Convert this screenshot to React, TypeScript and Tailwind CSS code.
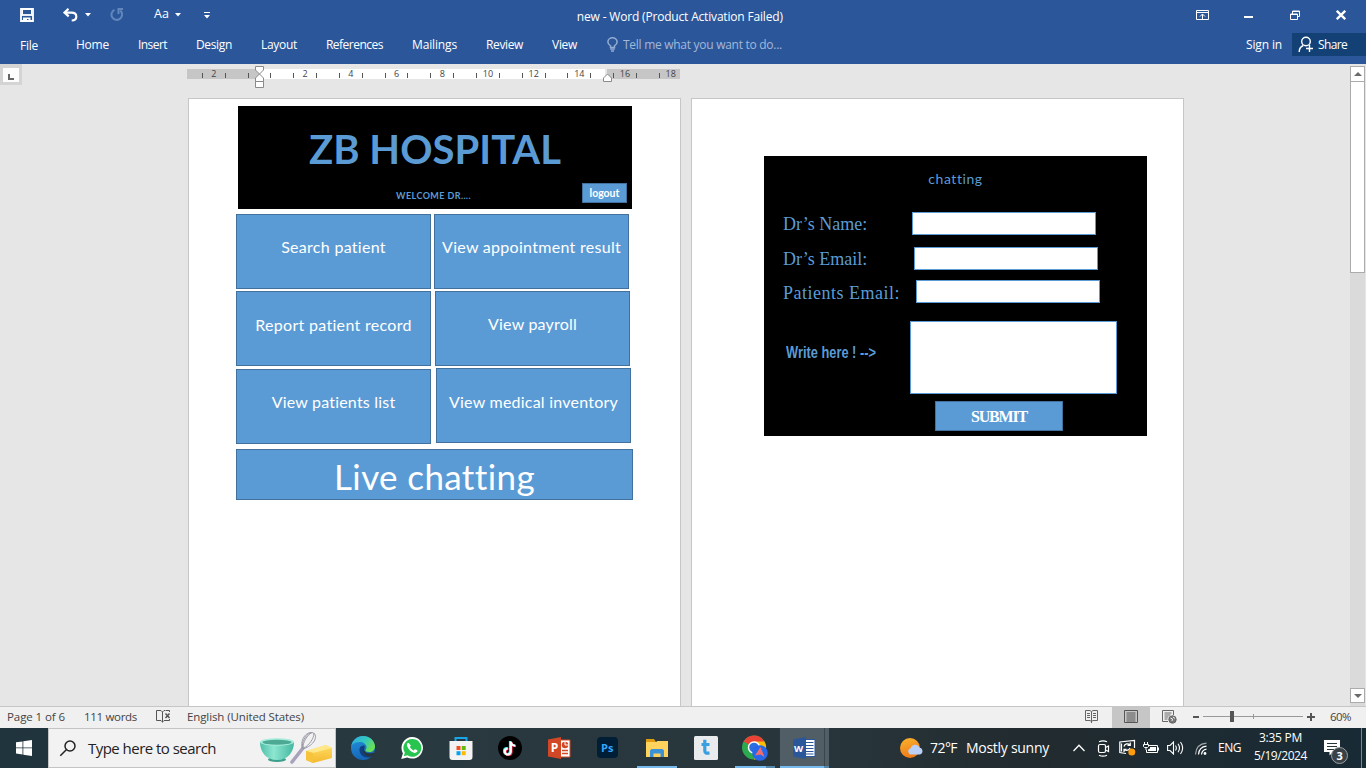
import React from "react";

const tabs = [
  { label: "Home", cls: "tracking-[-0.23px]" },
  { label: "Insert", cls: "tracking-[-0.56px]" },
  { label: "Design", cls: "tracking-[-0.35px]" },
  { label: "Layout", cls: "tracking-[-0.3px]" },
  { label: "References", cls: "tracking-[-0.51px]" },
  { label: "Mailings", cls: "tracking-[-0.14px]" },
  { label: "Review", cls: "tracking-[-0.37px]" },
  { label: "View", cls: "tracking-[-0.31px]" },
];

function Caret({ className = "" }: { className?: string }) {
  return (
    <svg className={className} width="6" height="4" viewBox="0 0 6 4" fill="#fff">
      <path d="M0 0h6L3 3.5z" />
    </svg>
  );
}

function TitleBar() {
  return (
    <div className="flex h-8 items-start">
      <svg className="ml-5 mt-2" width="14" height="14" viewBox="0 0 14 14" fill="none" stroke="#fff">
        <path d="M1 1h12v12H1z" strokeWidth="1.8" />
        <path d="M1 7h12" strokeWidth="1.8" />
        <path d="M3 9.5h7.5V13h-2v-2h-1.500v2H3z" fill="#fff" stroke="none" />
        <path d="M2.500 1v5.500M11.500 1v5.500" strokeWidth="1" />
      </svg>
      <svg className="ml-[29px] mt-[8px]" width="15" height="14" viewBox="0 0 15 14" fill="none" stroke="#fff" strokeWidth="2.2">
        <path d="M5.500 .8L1.500 4.600l4.200 3.800" />
        <path d="M2 4.600h6.500c3 0 4.800 1.600 4.800 3.900s-1.700 4-4.600 4" />
      </svg>
      <Caret className="ml-[7px] mt-[13px]" />
      <svg className="ml-[19px] mt-[8px]" width="14" height="14" viewBox="0 0 14 14" fill="none" stroke="#6287bd" strokeWidth="2">
        <path d="M4.500 1.800A5.300 5.300 0 1 0 10.300 2.600" />
        <path d="M13 1H8.500v5" />
      </svg>
      <span className="ml-[30px] mt-[5px] text-[12.5px] leading-[18px] text-white">Aa</span>
      <Caret className="ml-[6px] mt-[13px]" />
      <svg className="ml-[23px] mt-[12px]" width="6" height="7" viewBox="0 0 6 7" fill="#fff">
        <path d="M0 0h6v1H0zM0 3h6L3 6.500z" />
      </svg>
      <span className="ml-[367px] mt-2 w-[206px] text-[12px] leading-[18px] tracking-[-0.18px] text-white">new - Word (Product Activation Failed)</span>
      <svg className="ml-[413px] mt-[10px]" width="13" height="10" viewBox="0 0 13 10" fill="none" stroke="#fff">
        <path d="M.5.5h12v9H.5zM.5 2.500h12M6.500 9V4M4 6.500L6.500 4 9 6.500" />
      </svg>
      <span className="ml-[35px] mt-4 h-[2px] w-[9px] bg-white" />
      <svg className="ml-[37px] mt-[10px]" width="10" height="10" viewBox="0 0 10 10" fill="none" stroke="#fff">
        <path d="M.5 4h7v5.500h-7zM.5 4.500h7M2.500 4V1h7v5.500h-2M2.500 1.500h7" />
      </svg>
      <svg className="ml-[36px] mt-[10px]" width="10" height="10" viewBox="0 0 10 10" stroke="#fff" strokeWidth="2.300">
        <path d="M.8.8l8.400 8.400M9.200.8L.8 9.200" />
      </svg>
    </div>
  );
}

function TabBar() {
  return (
    <div className="flex h-8 text-[12px] leading-[18px] text-white">
      <span className="ml-5 mt-[5px] w-[56px] tracking-[-0.25px]">File</span>
      <div className="mt-1 flex gap-[29px]">
        {tabs.map((t) => (
          <span key={t.label} className={t.cls}>
            {t.label}
          </span>
        ))}
      </div>
      <svg className="ml-[30px] mt-[5px]" width="11" height="15" viewBox="0 0 11 15" fill="none" stroke="#93acd2" strokeWidth="1.500">
        <path d="M3.500 10.500V8.800C1.800 7.800.9 6.600.9 5a4.600 4.200 0 0 1 9.200 0c0 1.600-.9 2.800-2.600 3.800v1.700z" />
        <path d="M3.200 12h4.600M4 14h3" />
      </svg>
      <span className="ml-[5px] mt-1 w-[159px] whitespace-nowrap tracking-[-0.28px] text-[#a3b8d9]">Tell me what you want to do...</span>
      <span className="ml-auto mt-1 w-[46px] tracking-[-0.14px]">Sign in</span>
      <div className="mt-px flex h-[23px] w-[74px] bg-[#134176]">
        <svg className="ml-[6px] mt-[3px]" width="17" height="17" viewBox="0 0 17 17" fill="none" stroke="#fff" strokeWidth="1.400">
          <circle cx="8" cy="5.500" r="4.300" />
          <path d="M1.200 16c0-3.300 1.500-5.300 4-6.500M8 12.500h7M11.500 9v7" />
        </svg>
        <span className="ml-[3px] mt-[3px] tracking-[-0.65px]">Share</span>
      </div>
    </div>
  );
}

function Ruler() {
  const marks = Array.from({ length: 42 }, (_, i) => i - 5);
  return (
    <div className="relative ml-[187px] mt-[5px] flex h-[10px] w-[493px] items-center bg-[linear-gradient(to_right,#c6c6c6_72px,#fff_72px,#fff_418px,#e6e6e6_418px,#e6e6e6_420px,#c6c6c6_420px)] pl-[9.700px]">
      {marks.map((n) => (
        <span key={n} className="flex w-[11.425px] shrink-0 justify-center text-[9px] leading-[10px] text-[#444]">
          {n % 2 !== 0 ? <i className="mt-[2px] block h-[5px] w-px bg-[#555]" /> : n % 4 === 0 && n !== 0 ? Math.abs(n / 2) : null}
        </span>
      ))}
      <svg className="absolute -top-[3px] left-[68px]" width="9" height="22" viewBox="0 0 9 22" fill="#fff" stroke="#8a8a8a">
        <path d="M.5.5h8V4L4.500 8 .5 4zM.5 15.500h8V12L4.500 8 .5 12zM.5 15.500h8v6h-8z" />
      </svg>
      <svg className="absolute top-[4px] left-[416px]" width="9" height="9" viewBox="0 0 9 9" fill="#fff" stroke="#8a8a8a">
        <path d="M.5 8.500h8V5L4.500 1 .5 5z" />
      </svg>
    </div>
  );
}

const tile = "flex h-[75px] w-[195px] justify-center border border-[#41719c] bg-[#5b9bd5] leading-5 text-[16px] whitespace-nowrap text-white";

function HospitalPage() {
  return (
    <div className="w-[493px] border border-b-0 border-[#c6c6c6] bg-white font-['Lato',sans-serif]">
      <div className="ml-[49px] mt-[7px] flex h-[103px] w-[394px] flex-col bg-black text-[#5b9bd5]">
        <div className="mt-[18px] text-center text-[40px] leading-[50px] font-bold tracking-[0.020px]">ZB HOSPITAL</div>
        <div className="flex">
          <span className="ml-[158px] mt-[16px] w-[186px] text-[9px] leading-3 font-bold tracking-[0.440px]">WELCOME DR….</span>
          <span className="mt-[9px] h-5 w-[45px] border border-[#41719c] bg-[#5b9bd5] text-center text-[10.500px] leading-[19px] font-bold text-white">logout</span>
        </div>
      </div>
      <div className="ml-[47px] mt-[5px] flex gap-[3px]">
        <div className="flex flex-col">
          <div className={`${tile} pt-[22px] tracking-[0.29px]`}>Search patient</div>
          <div className={`${tile} mt-[2px] pt-[23px] tracking-[0.31px]`}>Report patient record</div>
          <div className={`${tile} mt-[3px] pt-[22px] tracking-[0.2px]`}>View patients list</div>
        </div>
        <div className="flex flex-col">
          <div className={`${tile} pt-[22px] tracking-[0.29px]`}>View appointment result</div>
          <div className={`${tile} ml-px mt-[2px] pt-[22px] tracking-[0.21px]`}>View payroll</div>
          <div className={`${tile} ml-[2px] mt-[2px] pt-[23px] tracking-[0.23px]`}>View medical inventory</div>
        </div>
      </div>
      <div className="ml-[47px] mt-[5px] h-[51px] w-[397px] border border-[#41719c] bg-[#5b9bd5] pt-[5px] text-center text-[35px] leading-[42px] tracking-[0.38px] text-white">Live chatting</div>
    </div>
  );
}

function ChatPage() {
  const label = "w-[129px] font-['Liberation_Serif',serif] text-[18px] leading-5";
  return (
    <div className="w-[493px] border border-b-0 border-[#c6c6c6] bg-white pl-[72px] pt-[57px]">
      <div className="flex h-[280px] w-[383px] flex-col bg-black text-[#5b9bd5]">
        <div className="mt-[13px] text-center font-['Lato',sans-serif] text-[14px] leading-5 tracking-[0.56px]">chatting</div>
        <div className="ml-[19px] mt-[23px] flex items-center">
          <span className={label}>Dr’s Name:</span>
          <span className="h-[23px] w-[184px] border border-[#5b9bd5] bg-white" />
        </div>
        <div className="ml-[19px] mt-[12px] flex items-center">
          <span className={label}>Dr’s Email:</span>
          <span className="ml-[2px] h-[23px] w-[184px] border border-[#5b9bd5] bg-white" />
        </div>
        <div className="ml-[19px] mt-[10px] flex items-center">
          <span className={`${label} pt-[3px] tracking-[0.5px]`}>Patients Email:</span>
          <span className="ml-[4px] h-[23px] w-[184px] border border-[#5b9bd5] bg-white" />
        </div>
        <div className="ml-[22px] mt-[18px] flex">
          <span className="mt-[21px] w-[124px] origin-left scale-x-[0.755] font-['Liberation_Sans',sans-serif] text-[17px] leading-[22px] font-bold whitespace-nowrap">{"Write here ! -->"}</span>
          <span className="h-[73px] w-[207px] border border-[#5b9bd5] bg-white" />
        </div>
        <div className="ml-[171px] mt-[7px] h-[30px] w-[128px] border border-[#41719c] bg-[#5b9bd5] text-center font-['Liberation_Serif',serif] text-[16px] leading-[29px] font-bold tracking-[-1.190px] text-white">SUBMIT</div>
      </div>
    </div>
  );
}

function ScrollBar() {
  return (
    <div className="mr-px mt-[2px] flex w-[15px] flex-col bg-[#dadada]">
      <div className="flex h-[16px] items-center justify-center border border-[#ababab] bg-white">
        <svg width="8" height="4" viewBox="0 0 8 4" fill="#6a6a6a"><path d="M4 0l4 4H0z" /></svg>
      </div>
      <div className="-mt-px h-[192px] border border-[#ababab] bg-white" />
      <div className="mb-[3px] mt-auto flex h-[15px] items-center justify-center border border-[#ababab] bg-white">
        <svg width="8" height="4" viewBox="0 0 8 4" fill="#6a6a6a"><path d="M4 4L0 0h8z" /></svg>
      </div>
    </div>
  );
}

function StatusBar() {
  return (
    <div className="flex h-[22px] border-t border-[#c6c6c6] bg-[#f0f0f0] text-[11.500px] leading-5 whitespace-nowrap text-[#444]">
      <span className="ml-[7px] w-[77px] tracking-[-0.080px]">Page 1 of 6</span>
      <span className="w-[72px] tracking-[-0.310px]">111 words</span>
      <svg className="mt-[3px]" width="15" height="13" viewBox="0 0 15 13" fill="none" stroke="#555">
        <path d="M6.500 2L5 .5H.5v10H5L6.500 12M6.500 2v10.500M6.500 2L8 .5h1.500M6.500 12L8 10.500h5.500V9M13.500 2V.5H10" />
        <path d="M9.500 3.500l4 4.500M13.500 3.500l-4 4.500" strokeWidth="1.500" />
      </svg>
      <span className="ml-[16px] tracking-[-0.110px]">English (United States)</span>
      <svg className="ml-auto mt-[3px]" width="13" height="13" viewBox="0 0 13 13" fill="none" stroke="#666">
        <path d="M.5.5H5l1.500 1L8 .5h4.500v10H8l-1.500 1-1.500-1H.5zM6.500 1.500V13M2 3.500h3M2 5.500h3M2 7.500h3M8 3.500h3M8 5.500h3M8 7.500h3" />
      </svg>
      <div className="ml-[14px] flex w-[38px] justify-center bg-[#c6c6c6] pt-[3px]">
        <svg width="14" height="13" viewBox="0 0 14 13" fill="none" stroke="#555">
          <path d="M.5.5h13v12H.5zM2.500 3h9M2.500 5h9M2.500 7h9M2.500 9h9M2.500 11h9" />
        </svg>
      </div>
      <svg className="ml-[12px] mt-[3px]" width="15" height="14" viewBox="0 0 15 14" fill="none" stroke="#666">
        <path d="M6 11.500H.5V.5h11V5M2.500 3h7M2.500 5h6M2.500 7h4M2.500 9h3" />
        <circle cx="10.500" cy="9.500" r="3.700" fill="#777" />
        <path d="M8.500 8l2 1-.5 2M11 7l2 1.500" stroke="#f0f0f0" />
      </svg>
      <span className="ml-[16px] mt-[9px] h-[2px] w-[6px] bg-[#555]" />
      <svg className="ml-[4px] mt-[4px]" width="100" height="12" viewBox="0 0 100 12">
        <path d="M0 5.500h100M50.500 3v5" stroke="#999" />
        <path d="M27 0h4v11h-4z" fill="#555" />
      </svg>
      <svg className="ml-[4px] mt-[6px]" width="8" height="8" viewBox="0 0 8 8"><path d="M0 4h8M4 0v8" stroke="#555" strokeWidth="2" /></svg>
      <span className="ml-[15px] mr-[14px] w-[22px] tracking-[-0.560px]">60%</span>
    </div>
  );
}

const taskIcons = [
  <svg key="edge" width="24" height="24" viewBox="0 0 24 24">
    <defs>
      <linearGradient id="e1" x1="0" y1="0" x2="1" y2="0.600"><stop offset="0" stopColor="#2aa8e8" /><stop offset="0.550" stopColor="#35c8bd" /><stop offset="1" stopColor="#6be04f" /></linearGradient>
      <linearGradient id="e2" x1="0" y1="0" x2="0.300" y2="1"><stop offset="0" stopColor="#2595dd" /><stop offset="1" stopColor="#1566b8" /></linearGradient>
    </defs>
    <circle cx="12" cy="12" r="12" fill="url(#e2)" />
    <path d="M.3 10C1.500 4 6.300 0 12 0c6.500 0 12 4.800 12 10.500 0 3.500-2.600 5.500-5.500 5.500-3 0-4.300-1-4-2 .6-.8 1-1.500 1-2.800C15.500 8 12.200 6 8.800 6 5 6 1.600 7.600.3 10z" fill="url(#e1)" />
    <path d="M8.500 13c-.5 5 3.500 8.500 8 8.500 2.500 0 4.700-.9 6-2.300.4-.5 0-.9-.6-.7-5.400 1.600-9-.8-8.700-4.300-.2-2.400 1.200-3 .3-4.500C11.500 9 8.800 10.500 8.500 13z" fill="#123f7e" />
    <path d="M13.200 12c-1 4 3 6.300 8.600 4.700l2 .8-1.700 2.500-4.600.6c-4-1.200-6.500-5-4.300-8.600z" fill="#25363d" />
  </svg>,
  <svg key="wa" width="24" height="24" viewBox="0 0 24 24">
    <path d="M12.200 1A10.800 10.800 0 0 0 2.900 17.200L1.200 23l6-1.600A10.800 10.800 0 1 0 12.200 1z" fill="#fff" />
    <path d="M12.200 3A8.900 8.900 0 0 0 4.800 16.700l-1 3.600 3.700-1A8.900 8.900 0 1 0 12.200 3z" fill="#27c450" />
    <path d="M9 7.300c-.5-.9-1.700-.2-2 .8-.8 3 3.800 8.500 7.800 8.800 1.500.1 3-1 2.700-2.300-.1-.5-2-1.300-2.500-1.300-.6 0-.9 1.200-1.500 1.100-1.200-.4-3-1.900-3.600-3.300 0-.5 1-1 .9-1.600z" fill="#fff" />
  </svg>,
  <svg key="store" width="24" height="24" viewBox="0 0 24 24">
    <path d="M6.500 6V2h11v4" fill="none" stroke="#19a5e8" strokeWidth="2" />
    <path d="M.5 5h23v16a3 3 0 0 1-3 3h-17a3 3 0 0 1-3-3z" fill="#f3f3f3" />
    <path d="M7.500 10h4v4h-4z" fill="#f25022" /><path d="M12.700 10h4v4h-4z" fill="#64b80a" />
    <path d="M7.500 15.200h4v4h-4z" fill="#00a4ef" /><path d="M12.700 15.200h4v4h-4z" fill="#ffb900" />
  </svg>,
  <svg key="tt" width="24" height="24" viewBox="0 0 24 24" fill="none" strokeWidth="2.200">
    <circle cx="12" cy="12" r="12" fill="#000" />
    <path d="M12 5v10a3 3 0 1 1-3-3c.5 0 0 0 .5.100M12 5c.2 2.500 2 4 4.500 4.200" stroke="#25f4ee" />
    <path d="M13.500 6v10a3 3 0 1 1-3-3M13.500 6c.2 2.500 2 4 4.500 4.200" stroke="#fe2c55" />
    <path d="M12.800 5.500v10a3 3 0 1 1-3-3M12.800 5.500c.2 2.500 2 4 4.500 4.200" stroke="#fff" />
  </svg>,
  <svg key="pp" width="24" height="24" viewBox="0 0 24 24">
    <path d="M12 4h11v17H12z" fill="#fff" stroke="#d24726" />
    <circle cx="18" cy="9" r="3.300" fill="#d24726" /><path d="M18 5v4h4" stroke="#fff" fill="none" />
    <path d="M15 14.500h6M15 17.500h6" stroke="#d24726" strokeWidth="1.500" />
    <path d="M1 3.500L14 1v22L1 20.500z" fill="#d24726" />
    <text x="3.800" y="16.300" fontSize="12" fontWeight="700" fill="#fff" fontFamily="Open Sans">P</text>
  </svg>,
  <svg key="ps" width="24" height="24" viewBox="0 0 24 24">
    <rect x="1" y="1" width="21" height="21" rx="4" fill="#001e36" />
    <text x="5" y="15.500" fontSize="11" fontWeight="700" fill="#31a8ff" fontFamily="Open Sans">Ps</text>
  </svg>,
  <svg key="ex" width="24" height="24" viewBox="0 0 24 24">
    <path d="M1 3h8l2 3v4H1z" fill="#e09c10" />
    <path d="M1 6h10l1.500-1H23v16H1z" fill="#ffd35c" />
    <path d="M5 21v-6.500L6.500 13h11l1.500 1.500V21h-3.500v-3.500h-7V21z" fill="#3c92d6" />
  </svg>,
  <svg key="t" width="24" height="24" viewBox="0 0 24 24">
    <rect width="24" height="24" rx="1.500" fill="#e9ebec" />
    <path d="M10.800 3.800v11c0 2.200 1.500 2.700 4.700 2.200M7.500 8.500H15.500" fill="none" stroke="#3a9fe0" strokeWidth="3.200" />
  </svg>,
  <svg key="ch" width="26" height="26" viewBox="0 0 26 26">
    <circle cx="12" cy="12.500" r="12" fill="#2da94f" />
    <path d="M12 12.500L1.600 6.500a12 12 0 0 1 20.800 0z" fill="#ea4335" />
    <path d="M12 12.500V6.500h10.400A12 12 0 0 1 12 24.500z" fill="#fbbc04" />
    <circle cx="12" cy="12.500" r="6.200" fill="#fff" /><circle cx="12" cy="12.500" r="4.800" fill="#2a6ee0" />
    <circle cx="18" cy="18" r="7.800" fill="#2768ea" />
    <path d="M18.500 12l4 10-4-2.500-5.500 1z" fill="#f26b6b" />
  </svg>,
  <svg key="w" width="24" height="24" viewBox="0 0 24 24">
    <path d="M12 3.500h11v17H12z" fill="#fff" stroke="#2b579a" />
    <path d="M14 6.500h7.500M14 9.500h7.500M14 12.500h7.500M14 15.500h7.500M14 18h7.500" stroke="#2b579a" strokeWidth="1.200" />
    <path d="M1 3.500L14 1v22L1 20.500z" fill="#2b579a" />
    <text x="2" y="15.500" fontSize="9.500" fontWeight="700" fill="#fff" fontFamily="Open Sans">W</text>
  </svg>,
];

function TaskBar() {
  return (
    <div className="flex h-10 bg-[linear-gradient(to_right,#20343d,#293940_30%,#28363b_60%,#222b2f_75%,#182a35)] text-white">
      <svg className="ml-4 mt-3" width="16" height="16" viewBox="0 0 16 16" fill="#fff">
        <path d="M0 2.300L6.500 1.400V7.500H0zM7.300 1.300L16 0v7.500H7.300zM0 8.300h6.500v6.200L0 13.600zM7.300 8.300H16V16l-8.700-1.300z" />
      </svg>
      <div className="ml-4 flex w-72 border border-[#c4c4c4] bg-[#f2f2f2]">
        <svg className="ml-[10px] mt-[11px]" width="18" height="17" viewBox="0 0 18 17" fill="none" stroke="#222" strokeWidth="1.500">
          <circle cx="11" cy="6" r="5" /><path d="M7.300 9.700L1.300 15.700" />
        </svg>
        <span className="ml-[11px] mt-[9px] text-[15px] leading-5 tracking-[-0.530px] whitespace-nowrap text-[#222]">Type here to search</span>
        <svg className="ml-auto mr-[2px] mt-px" width="76" height="36" viewBox="0 0 76 36">
          <defs>
            <linearGradient id="bw" x1="0" x2="1"><stop offset="0" stopColor="#4fbfa8" /><stop offset="0.400" stopColor="#8de6d0" /><stop offset="1" stopColor="#45b8a0" /></linearGradient>
            <linearGradient id="bt" x1="0" y1="0" x2="0" y2="1"><stop offset="0" stopColor="#ffdc62" /><stop offset="1" stopColor="#f4b92f" /></linearGradient>
          </defs>
          <ellipse cx="20" cy="29.500" rx="9" ry="2.500" fill="#3c9f8c" />
          <path d="M3 12c0 10 6 18 17 18s17-8 17-18z" fill="url(#bw)" />
          <ellipse cx="20" cy="12" rx="17" ry="3.800" fill="#a6eddb" />
          <ellipse cx="20" cy="12.300" rx="14.500" ry="2.500" fill="#4da994" />
          <path d="M35 32L46 18" stroke="#a9a2bd" strokeWidth="3.600" strokeLinecap="round" />
          <g fill="none" stroke="#9d9ba8" strokeWidth="1">
            <path d="M45.500 19C43 12 47 3 54 2.500S61 14 46 19M45.500 19C46 12 50 5 55 2.500M46 19C52 15 57 9 57 3M45.500 19C44 11 50 3 55 2.500" />
          </g>
          <path d="M49 21l20-6 6 3v10l-19 5-7-3z" fill="url(#bt)" />
          <path d="M49 21l20-6 6 3-19 5z" fill="#ffe88a" /><path d="M49 21l7 2v10l-7-3z" fill="#f7c23c" />
        </svg>
      </div>
      <div className="ml-[2.500px] flex">
        {taskIcons.map((icon, i) => (
          <div key={i} className={i === 9 ? "relative flex w-[49px] items-center justify-center bg-[linear-gradient(to_right,#515e65_44px,#39464c_44px,#39464c_45px,#515e65_45px)]" : "relative flex w-[49px] items-center justify-center"}>
            {icon}
            {i === 6 && <span className="absolute bottom-0 left-[4px] h-[2px] w-10 bg-[#76b9ed]" />}
            {i === 8 && <span className="absolute bottom-0 left-[4px] h-[2px] w-10 bg-[linear-gradient(to_right,#76b9ed_31px,#5586ac_31px)]" />}
            {i === 9 && <span className="absolute bottom-0 left-0 h-[2px] w-[49px] bg-[linear-gradient(to_right,#76b9ed_44px,#5586ac_44px)]" />}
          </div>
        ))}
      </div>
      <svg className="ml-auto mt-[9px]" width="24" height="22" viewBox="0 0 24 22">
        <defs>
          <linearGradient id="sn" x1="0" y1="0" x2="0.300" y2="1"><stop offset="0" stopColor="#fbb52c" /><stop offset="1" stopColor="#ee7b1a" /></linearGradient>
        </defs>
        <circle cx="11" cy="11" r="10" fill="url(#sn)" />
        <path d="M12 17.500a3.200 3.200 0 0 1-.3-6.300 4.600 4.600 0 0 1 8.800-.4 3.400 3.400 0 0 1 .3 6.700z" fill="#b9cff5" />
      </svg>
      <span className="ml-[7px] mt-[10px] w-[36px] text-[14px] leading-5 tracking-[-0.560px]">72°F</span>
      <span className="mt-[10px] w-[83px] text-[14px] leading-5 tracking-[-0.280px] whitespace-nowrap">Mostly sunny</span>
      <svg className="ml-[24px] mt-4" width="12" height="8" viewBox="0 0 12 8" fill="none" stroke="#fff" strokeWidth="1.300"><path d="M.5 7L6 1.300 11.500 7" /></svg>
      <svg className="ml-[12px] mt-[12px]" width="13" height="17" viewBox="0 0 13 17" fill="none" stroke="#fff" strokeWidth="1.200">
        <rect x="1.500" y="4.500" width="7" height="8" rx="1.500" /><path d="M8.500 7.500L11.500 6v5.500l-3-1.500M2 1.800Q6 0 10 1.800M2 15.200q4 1.800 8 0" />
      </svg>
      <svg className="ml-[9px] mt-[11px]" width="17" height="17" viewBox="0 0 17 17" fill="none" stroke="#fff" strokeWidth="1.200">
        <path d="M7 14.500L.8 13.500V3L15.500 1.300V9M2.500 12.500V4.500" />
        <path d="M5 7.500A3.500 3.500 0 0 1 11 6M11.300 3.500V6.300H8.500M11 9a3.500 3.500 0 0 1-5.500 1.500M5 13v-2.700h2.500" />
        <circle cx="12.800" cy="13" r="3.500" fill="#ff9b0f" stroke="none" />
      </svg>
      <svg className="ml-[7px] mt-[14px]" width="17" height="12" viewBox="0 0 17 12" fill="none" stroke="#fff">
        <path d="M5.500 3.500h9v7h-11V8M15.500 5.500v3" /><path d="M7 5h6v4H5V7.500l2-1z" fill="#fff" stroke="none" />
        <path d="M1.500 0v2M4.500 0v2M.5 2.500h5v2l-1 1h-3l-1-1zM3 5.500V8" />
      </svg>
      <svg className="ml-[7px] mt-[13px]" width="17" height="14" viewBox="0 0 17 14" fill="none" stroke="#fff" strokeWidth="1.100">
        <path d="M.6 4.500H3L6.500 1v12L3 9.500H.6zM8.500 4.500q1.700 2.500 0 5M11 2.700q3 4.300 0 8.600M13.500 1q4.300 6 0 12" />
      </svg>
      <svg className="ml-[10px] mt-[14px]" width="14" height="14" viewBox="0 0 14 14" fill="none" stroke="#fff" strokeWidth="1.200">
        <path d="M1.500 12.500Q2 2 12.500 1.200" opacity="0.600" /><path d="M4.500 12.500Q5 5 12.500 4.200M7.500 12.500Q8 8 12.500 7.200" /><circle cx="11" cy="11.500" r="1.400" fill="#fff" stroke="none" />
      </svg>
      <span className="ml-[10px] mt-[10px] w-[36px] text-[12px] leading-5 tracking-[-0.480px]">ENG</span>
      <div className="flex w-[53px] flex-col items-center pt-[1px] text-[12px] leading-[18px]">
        <span className="tracking-[-0.270px]">3:35 PM</span>
        <span className="tracking-[-0.430px]">5/19/2024</span>
      </div>
      <svg className="ml-[17px] mt-[12px]" width="25" height="24" viewBox="0 0 25 24">
        <path d="M0 0h16v12H9l-3.500 3.500V12H0z" fill="#fff" /><path d="M3 3.500h10M3 6.500h10M3 9.500h7" stroke="#26343b" />
        <circle cx="15.500" cy="15.500" r="8" fill="#3a4248" stroke="#9aa0a3" />
        <text x="12.500" y="19.500" fontSize="11" fontWeight="700" fill="#fff" fontFamily="Open Sans">3</text>
      </svg>
      <span className="ml-[12px] mr-[4px] w-px bg-[#7d868a]" />
    </div>
  );
}

export default function App() {
  return (
    <div className="flex h-[768px] w-[1366px] flex-col overflow-hidden bg-[#e6e6e6] font-['Open_Sans',sans-serif]">
      <header className="bg-[#2b579a]">
        <TitleBar />
        <TabBar />
      </header>
      <main className="flex h-[642px]">
        <div className="flex w-[1350px] flex-col">
          <div className="flex h-[34px]">
            <div className="-mr-[22px] flex h-[21px] w-[22px] shrink-0 bg-[#d4d4d4] pl-[3px] pt-[4px]">
              <div className="flex h-[14px] w-[16px] items-center justify-center bg-[#fdfdfd]">
                <span className="mt-[3px] h-[6px] w-[6px] border-b-2 border-l-2 border-[#666]" />
              </div>
            </div>
            <Ruler />
          </div>
          <div className="ml-[188px] flex grow gap-[10px]">
            <HospitalPage />
            <ChatPage />
          </div>
        </div>
        <ScrollBar />
      </main>
      <StatusBar />
      <TaskBar />
    </div>
  );
}
